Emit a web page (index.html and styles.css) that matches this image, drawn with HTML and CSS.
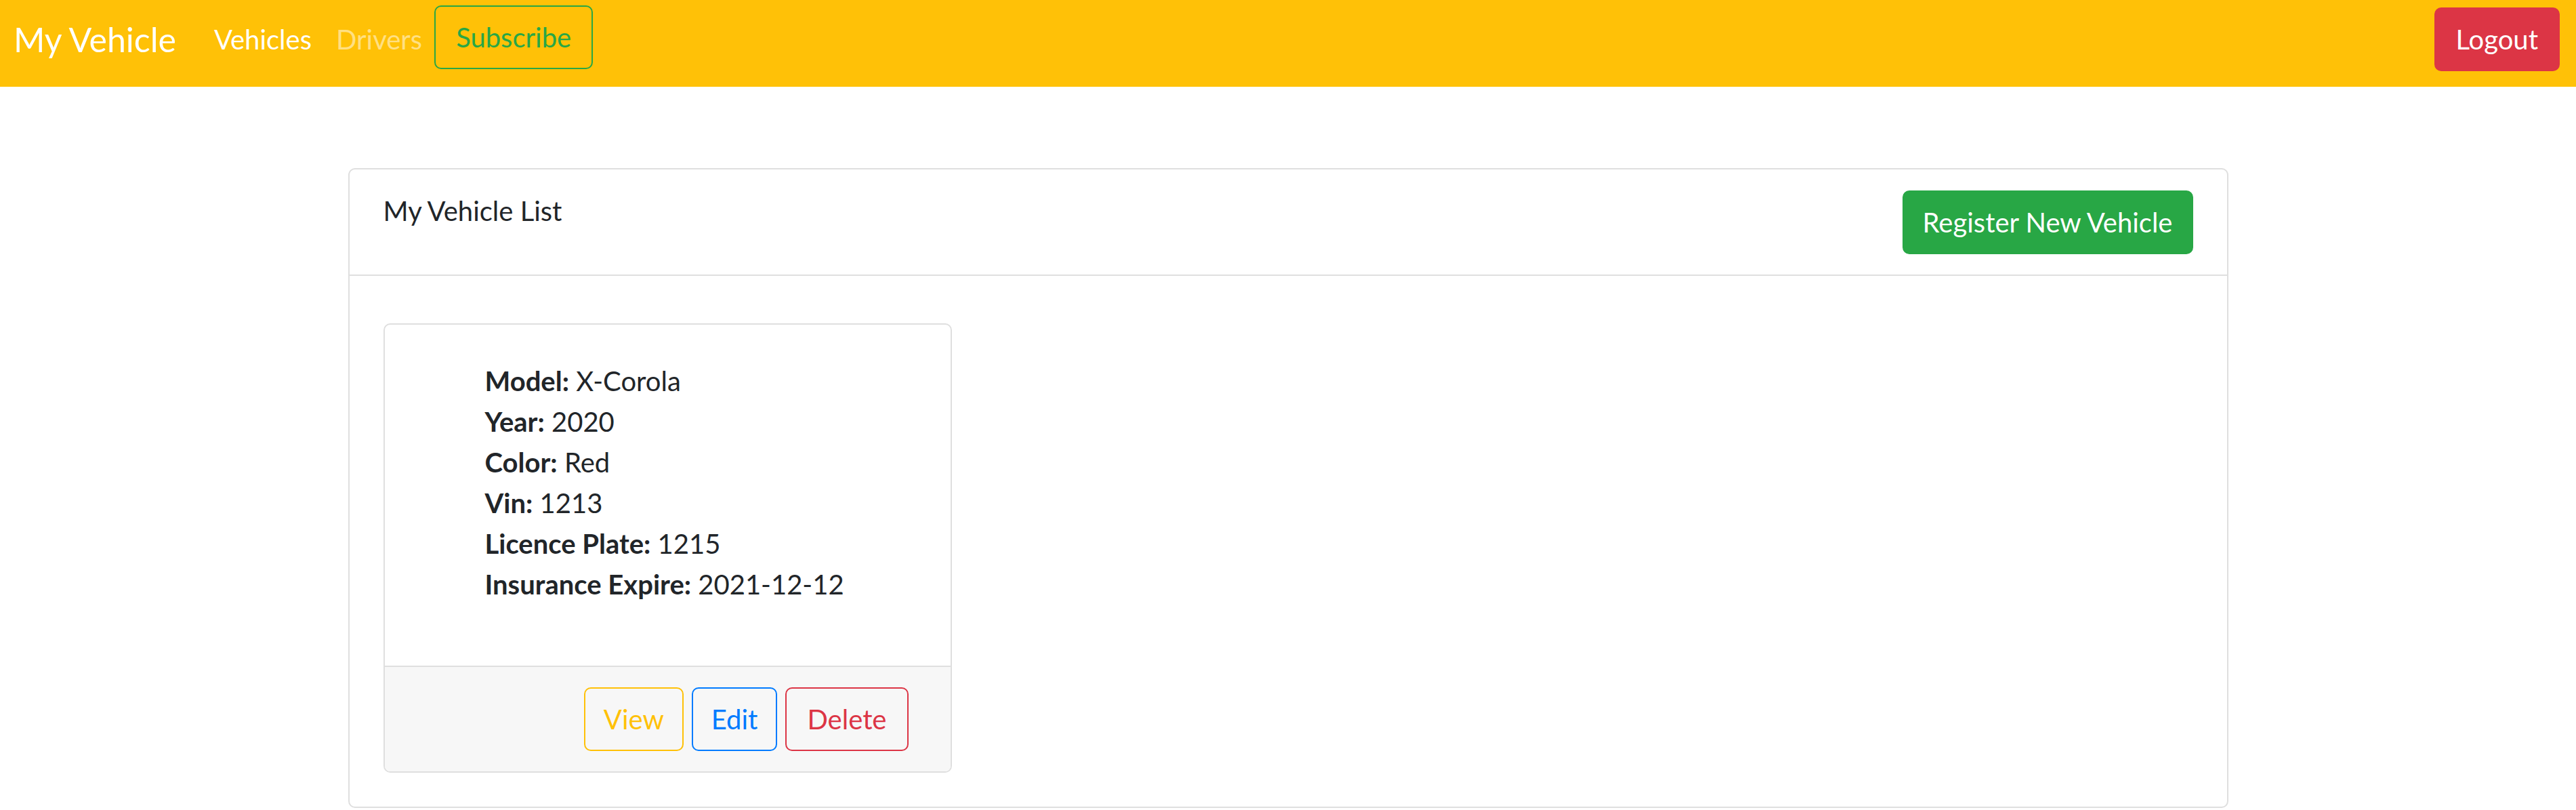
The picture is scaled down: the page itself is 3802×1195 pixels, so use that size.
FILE: index.html
```html
<!DOCTYPE html>
<html lang="en">
<head>
<meta charset="utf-8">
<title>My Vehicle</title>
<link rel="stylesheet" href="styles.css">
</head>
<body>
<nav class="navbar">
  <a class="brand" href="#">My Vehicle</a>
  <ul class="nav">
    <li><a class="nav-link active" href="#">Vehicles</a></li>
    <li><a class="nav-link muted" href="#">Drivers</a></li>
    <li><a class="btn btn-outline-success subscribe" href="#">Subscribe</a></li>
  </ul>
  <button class="btn btn-danger logout" type="button">Logout</button>
</nav>
<main class="container">
  <section class="card">
    <div class="card-header">
      <span class="card-title">My Vehicle List</span>
      <button class="btn btn-success" type="button">Register New Vehicle</button>
    </div>
    <div class="card-body">
      <div class="vehicle-card">
        <div class="vehicle-body">
          <p class="details">
            <span class="row"><strong>Model:</strong> X-Corola</span>
            <span class="row"><strong>Year:</strong> 2020</span>
            <span class="row"><strong>Color:</strong> Red</span>
            <span class="row"><strong>Vin:</strong> 1213</span>
            <span class="row"><strong>Licence Plate:</strong> 1215</span>
            <span class="row"><strong>Insurance Expire:</strong> 2021-12-12</span>
          </p>
        </div>
        <div class="vehicle-footer">
          <button class="btn btn-outline-warning" type="button">View</button>
          <button class="btn btn-outline-primary" type="button">Edit</button>
          <button class="btn btn-outline-danger" type="button">Delete</button>
        </div>
      </div>
    </div>
  </section>
</main>
</body>
</html>
```
FILE: styles.css
```css
* { box-sizing: border-box; }

html, body {
  margin: 0;
  padding: 0;
  background: #fff;
}

body {
  font-family: Lato, "Liberation Sans", sans-serif;
  font-size: 40px;
  line-height: 60px;
  color: #212529;
}

a { text-decoration: none; }

.navbar {
  display: flex;
  align-items: center;
  height: 128px;
  padding: 0 24px 12px 20px;
  background: #ffc107;
}

.brand {
  font-size: 50px;
  line-height: 75px;
  padding: 12px 0;
  margin-right: 38px;
  color: #fff;
}

.nav {
  display: flex;
  align-items: center;
  list-style: none;
  margin: 0;
  padding: 0;
}

.nav-link {
  display: block;
  padding: 20px 18px;
  line-height: 60px;
}

.nav-link.active { color: #fff; }
.nav-link.muted { color: rgba(255, 255, 255, 0.5); }

.btn {
  display: inline-block;
  font-family: inherit;
  font-size: 40px;
  line-height: 60px;
  padding: 15px 30px;
  border: 2px solid transparent;
  border-radius: 10px;
  background: transparent;
  cursor: pointer;
  white-space: nowrap;
}

.subscribe { margin-bottom: 6px; }

.btn-outline-success { color: #28a745; border-color: #28a745; }
.btn-outline-warning { color: #ffc107; border-color: #ffc107; }
.btn-outline-primary { color: #007bff; border-color: #007bff; }
.btn-outline-danger { color: #dc3545; border-color: #dc3545; }

.btn-danger { color: #fff; background: #dc3545; border-color: #dc3545; }
.btn-success { color: #fff; background: #28a745; border-color: #28a745; }

.logout { margin-left: auto; }

.container {
  width: 2775px;
  margin: 120px auto 0;
}

.card {
  border: 2px solid #dfdfdf;
  border-radius: 10px;
  background: #fff;
}

.card-header {
  display: flex;
  justify-content: space-between;
  align-items: flex-start;
  padding: 31px 50px 30px;
  border-bottom: 2px solid #dfdfdf;
}

.card-header .btn { padding: 15px 28px; }

.card-body {
  padding: 70px 50px 50px;
}

.vehicle-card {
  width: 839px;
  border: 2px solid #dfdfdf;
  border-radius: 10px;
  overflow: hidden;
}

.vehicle-body {
  padding: 53px 50px 50px 148px;
}

.details {
  margin: 0 0 40px;
}

.row { display: block; }

.vehicle-footer {
  display: flex;
  justify-content: flex-end;
  gap: 12px;
  padding: 30px 62px 30px 50px;
  background: #f7f7f7;
  border-top: 2px solid #dfdfdf;
}

.vehicle-footer .btn-outline-warning,
.vehicle-footer .btn-outline-primary { padding: 15px 27px; }
```
